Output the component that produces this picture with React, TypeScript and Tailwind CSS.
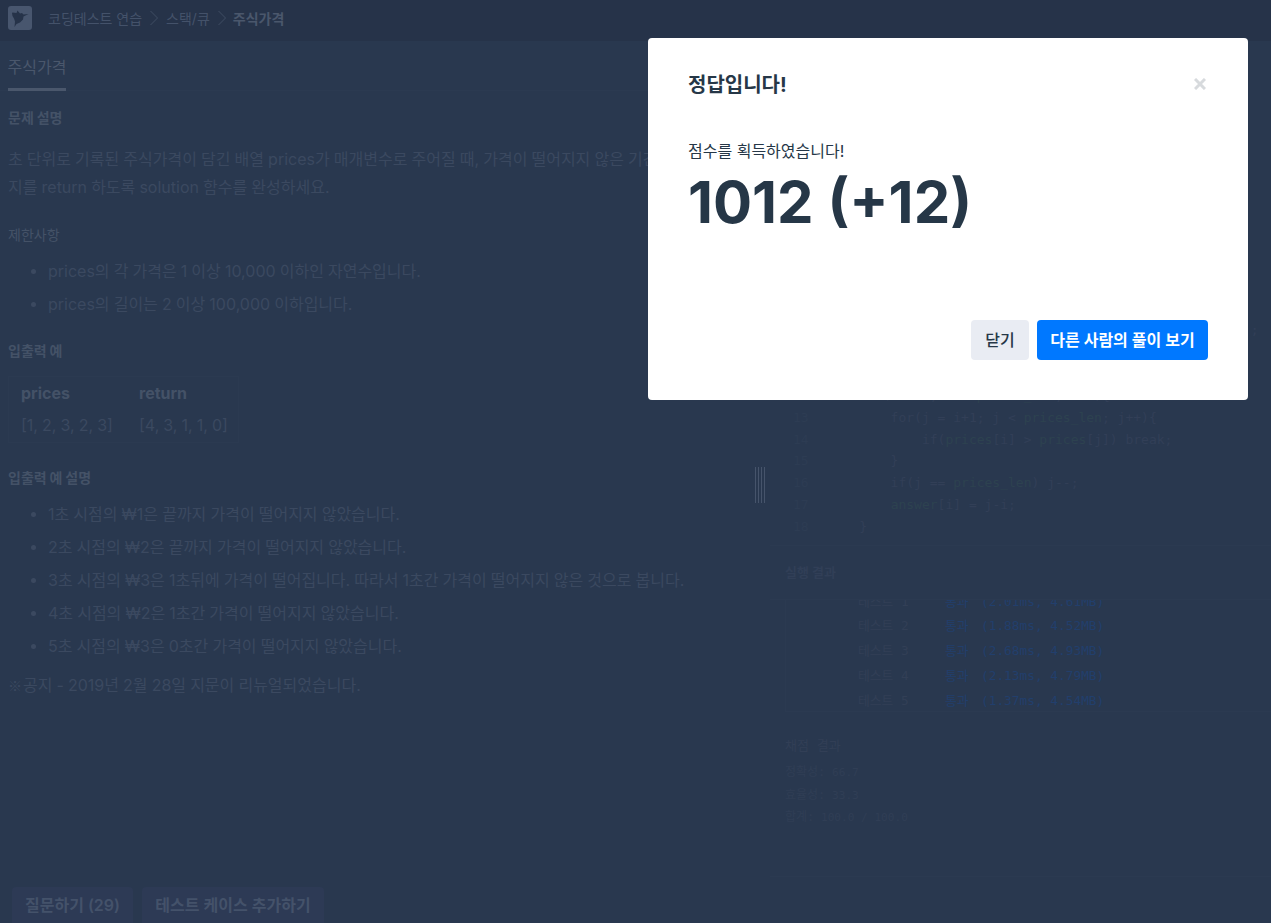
const bodyFont = "[font-family:Inter,'Noto_Sans_CJK_KR',sans-serif]";
const monoFont = "font-['DejaVu_Sans_Mono','Noto_Sans_CJK_KR',monospace]";

const limits = ['prices의 각 가격은 1 이상 10,000 이하인 자연수입니다.', 'prices의 길이는 2 이상 100,000 이하입니다.'];

const explain = [
  '1초 시점의 ₩1은 끝까지 가격이 떨어지지 않았습니다.',
  '2초 시점의 ₩2은 끝까지 가격이 떨어지지 않았습니다.',
  '3초 시점의 ₩3은 1초뒤에 가격이 떨어집니다. 따라서 1초간 가격이 떨어지지 않은 것으로 봅니다.',
  '4초 시점의 ₩2은 1초간 가격이 떨어지지 않았습니다.',
  '5초 시점의 ₩3은 0초간 가격이 떨어지지 않았습니다.',
];

const codeLines = [
  '#include <stdio.h>',
  '#include <stdbool.h>',
  '#include <stdlib.h>',
  '',
  '// prices_len은 배열 prices의 길이입니다.',
  'int* solution(int prices[], size_t prices_len) {',
  '    int i, j;',
  '    // return 값은 malloc 등 동적 할당을 사용해주세요.',
  '    int* answer = (int*)malloc(sizeof(int)*prices_len);',
  '',
  '',
  '    for(i = 0; i < prices_len; i++){',
  '        for(j = i+1; j < prices_len; j++){',
  '            if(prices[i] > prices[j]) break;',
  '        }',
  '        if(j == prices_len) j--;',
  '        answer[i] = j-i;',
  '    }',
];

const results = [
  ['테스트 1', '(2.01ms, 4.61MB)'],
  ['테스트 2', '(1.88ms, 4.52MB)'],
  ['테스트 3', '(2.68ms, 4.93MB)'],
  ['테스트 4', '(2.13ms, 4.79MB)'],
  ['테스트 5', '(1.37ms, 4.54MB)'],
];

const scores = [
  ['정확성:', '66.7'],
  ['효율성:', '33.3'],
  ['합계:', '100.0 / 100.0'],
];

function Chevron() {
  return (
    <svg className="w-[10px] h-[18px] mx-[7px]" viewBox="0 0 10 18" fill="none" stroke="#3f4d63" strokeWidth="1">
      <path d="M1.5 2l7 7-7 7" />
    </svg>
  );
}

function Heading({ children, className = '' }: { children: string; className?: string }) {
  return <h5 className={`text-[14px] leading-[20px] font-bold text-[#445267] ${className}`}>{children}</h5>;
}

function Bullets({ items, className = '' }: { items: string[]; className?: string }) {
  return (
    <ul className={`flex flex-col gap-[5px] ${className}`}>
      {items.map((text) => (
        <li key={text} className="flex items-center h-[28px] text-[16px] text-[#3b4960]">
          <span className="w-[5px] h-[5px] rounded-full bg-[#3b4960] ml-[23px] mr-[12px]" />
          {text}
        </li>
      ))}
    </ul>
  );
}

function CodeEditor() {
  return (
    <div className={`h-[505px] pt-[103px] overflow-hidden border-b border-[#2b3a51] ${monoFont} text-[13px] leading-[21.9px] font-light`}>
      {codeLines.map((line, i) => (
        <div key={i} className="flex h-[21.9px]">
          <span className="w-[58px] pl-[23px] text-[#2d3c53]">{i + 1}</span>
          <span className="whitespace-pre text-[#323f57]">
            {line.split(/(prices_len|prices|answer)/).map((part, k) =>
              part === 'prices_len' || part === 'prices' || part === 'answer' ? (
                <span key={k} className="text-[#2d4250]">{part}</span>
              ) : (
                part
              ),
            )}
          </span>
        </div>
      ))}
    </div>
  );
}

function ResultPanel() {
  return (
    <div className="h-[331px] border-b border-[#2b3a51]">
      <div className="h-[54px] pl-[15px] flex items-center border-b border-[#2b3a51] text-[13px] font-bold text-[#313f57]">실행 결과</div>
      <div className={`ml-[15px] h-[112px] border-l border-b border-[#2b3a51] overflow-hidden ${monoFont} text-[12.8px]`}>
        {results.map(([name, status]) => (
          <div key={name} className="flex h-[24.7px] items-center -translate-y-[11px]">
            <span className="w-[87px] ml-[72px] whitespace-pre text-[#323f56]">{name}</span>
            <span className="w-[36px] text-[#223f6c]">통과</span>
            <span className="whitespace-pre text-[#223f6c]">{status}</span>
          </div>
        ))}
      </div>
      <div className={`pl-[15px] pt-[24px] ${monoFont} text-[11.1px] text-[#303e55]`}>
        <div className="h-[22px] text-[13px] text-[#323f56] mb-[5px]">채점 결과</div>
        {scores.map(([label, value]) => (
          <div key={label} className="h-[22.5px] whitespace-pre">
            <span className="text-[12px]">{label}</span> {value}
          </div>
        ))}
      </div>
    </div>
  );
}

export default function App() {
  return (
    <div className={`relative h-[923px] overflow-hidden bg-[#29384f] ${bodyFont}`}>
      <header className="h-[41px] bg-[#263349] flex items-center pl-[8px] pb-[5px]">
        <div className="w-[24px] h-[24px] rounded-[3px] bg-[#48566e] flex items-center justify-center">
          <svg className="w-[20px] h-[20px]" viewBox="0 0 20 20" fill="#263349">
            <path d="M2.5 4.5l4 .5 1-2.5 2.5 3 2-.5 1.5 1.5 5-.5-5 2.5-.5 3-3 3-3.5 1.5-2 3 .5-5.5-1-3-1.5-2.5-.5-3z" />
          </svg>
        </div>
        <span className="ml-[16px] text-[14px] text-[#44526a]">코딩테스트 연습</span>
        <Chevron />
        <span className="text-[14px] text-[#44526a]">스택/큐</span>
        <Chevron />
        <span className="text-[14px] font-bold text-[#4a576c] -ml-px">주식가격</span>
      </header>

      <div className="flex h-[882px]">
        <section className="w-[755px] shrink-0 overflow-hidden [word-spacing:-0.4px]">
          <div className="h-[50px] border-b border-[#2b3a51] pl-[8px]">
            <div className="w-[58px] h-[50px] border-b-[3px] border-[#4a576c] flex items-center justify-center pt-[5px] whitespace-nowrap text-[16px] text-[#4a576c]">주식가격</div>
          </div>
          <div className="px-[8px] pt-[17px] w-[900px]">
            <Heading>문제 설명</Heading>
            <p className="mt-[17px] text-[16px] leading-[28px] text-[#3b4960] w-[725px] break-all">
              초 단위로 기록된 주식가격이 담긴 배열 prices가 매개변수로 주어질 때, 가격이 떨어지지 않은 기간은 몇 초인지를 return 하도록 solution 함수를 완성하세요.
            </p>
            <Heading className="mt-[24px] font-normal">제한사항</Heading>
            <Bullets items={limits} className="mt-[12px]" />
            <Heading className="mt-[23px]">입출력 예</Heading>
            <div className="mt-[15px] w-[231px] h-[67px] border border-[#2b3a51] pl-[12px] text-[16px]">
              <div className="flex h-[31px] items-center font-bold text-[#445267]">
                <span className="w-[118px]">prices</span>
                <span>return</span>
              </div>
              <div className="flex h-[34px] items-center text-[#3b4960]">
                <span className="w-[118px]">[1, 2, 3, 2, 3]</span>
                <span>[4, 3, 1, 1, 0]</span>
              </div>
            </div>
            <Heading className="mt-[25px]">입출력 예 설명</Heading>
            <Bullets items={explain} className="mt-[12px]" />
            <p className="mt-[11px] h-[28px] leading-[28px] text-[16px] text-[#3b4960]">
              <span className="inline-block w-[15px] text-[14px] font-['Noto_Sans_CJK_KR']">※</span>공지 - 2019년 2월 28일 지문이 리뉴얼되었습니다.
            </p>
          </div>
        </section>

        <div className="w-[15px] shrink-0 pt-[426px]">
          <div className="w-[10px] h-[36px] flex justify-between">
            <span className="w-px bg-[#46546b]" />
            <span className="w-px bg-[#46546b]" />
            <span className="w-px bg-[#46546b]" />
            <span className="w-px bg-[#46546b]" />
          </div>
        </div>

        <section className="flex-1 min-w-0 overflow-hidden">
          <CodeEditor />
          <ResultPanel />
        </section>
      </div>

      <div className="absolute left-[12px] bottom-0 flex gap-[9px]">
        <button className="w-[121px] h-[36px] rounded-t-[4px] bg-[#2d3a55] text-[16px] font-semibold text-[#44526a]">질문하기 (29)</button>
        <button className="w-[182px] h-[36px] rounded-t-[4px] bg-[#2d3a55] text-[16px] font-semibold text-[#44526a]">테스트 케이스 추가하기</button>
      </div>

      <div className="absolute left-[648px] top-[38px] w-[600px] h-[362px] rounded-[4px] bg-white flex flex-col px-[40px] pt-[32px] pb-[40px]">
        <div className="flex items-center justify-between h-[30px]">
          <h4 className="text-[20px] font-bold text-[#263747]">정답입니다!</h4>
          <svg className="w-[12px] h-[12px] mr-[2px] mb-[3px]" viewBox="0 0 12 12" stroke="#d7dadd" strokeWidth="3" fill="none">
            <path d="M1 1l10 10M11 1L1 11" />
          </svg>
        </div>
        <p className="mt-[39px] text-[16px] leading-[24px] text-[#263747]">점수를 획득하였습니다!</p>
        <p className="mt-[3px] text-[58px] leading-[72px] font-bold text-[#263747]">1012 (+12)</p>
        <div className="mt-auto flex justify-end gap-[8px]">
          <button className="w-[58px] h-[40px] rounded-[4px] bg-[#e9ecf3] text-[16px] font-medium text-[#263747]">닫기</button>
          <button className="w-[171px] h-[40px] rounded-[4px] bg-[#0078ff] text-[16px] font-semibold text-white">다른 사람의 풀이 보기</button>
        </div>
      </div>
    </div>
  );
}
